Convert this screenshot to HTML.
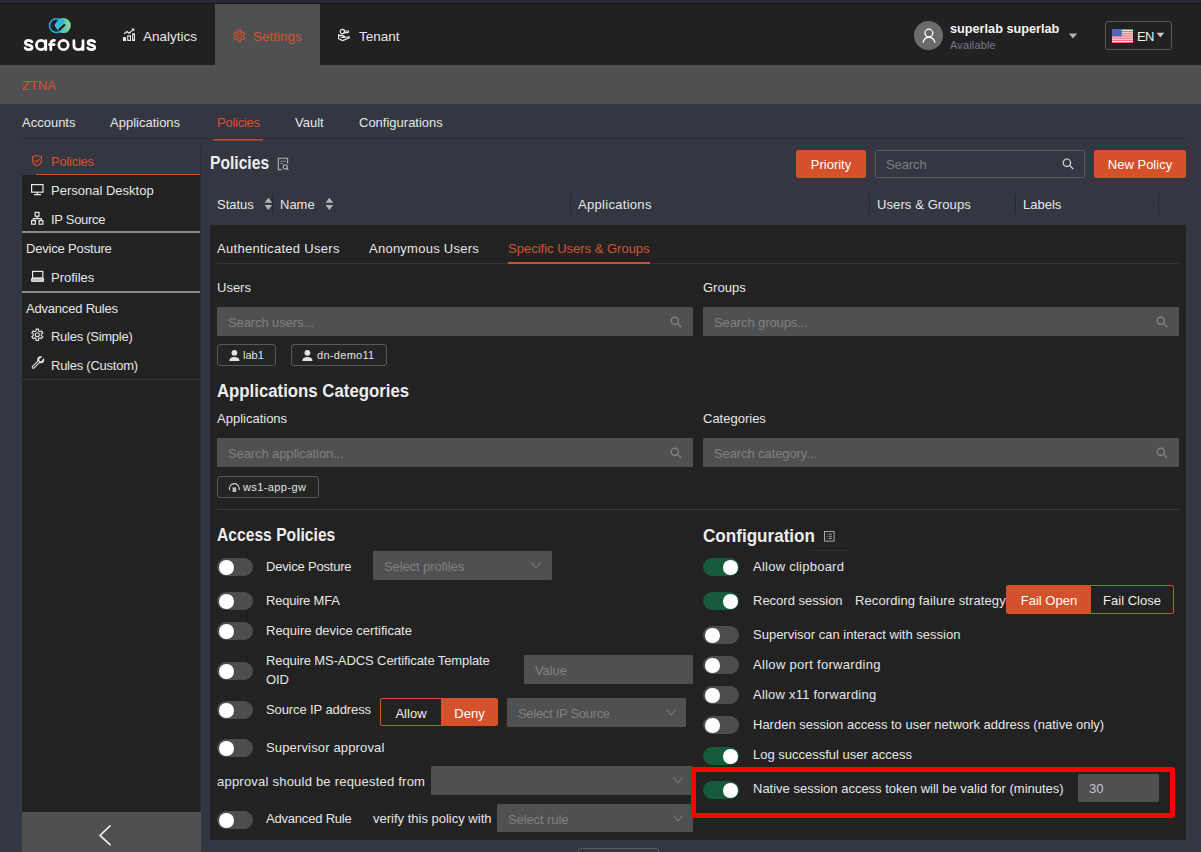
<!DOCTYPE html>
<html><head><meta charset="utf-8">
<style>
*{box-sizing:border-box;margin:0;padding:0}
html,body{width:1201px;height:852px;overflow:hidden;background:#343741;font-family:"Liberation Sans",sans-serif;color:#e6e6e6;font-size:13px;position:relative}
.a{position:absolute}
.t{position:absolute;white-space:nowrap;line-height:16px}
.or{color:#d4532f}
.sep{position:absolute;left:22px;width:178px;height:2px;background:#8a8a8a}
.btn{position:absolute;background:#d5512c;color:#fff;border-radius:2px;text-align:center;line-height:30px}
.inp{position:absolute;letter-spacing:-0.1px;background:#4f5051;color:#808080;line-height:31px;padding-left:11px;white-space:nowrap;border-radius:1px}
.tog{position:absolute;width:36px;height:18px;border-radius:9px;background:#4c4d4e}
.tog::after{content:"";position:absolute;left:2px;top:2px;width:14.5px;height:14.5px;border-radius:50%;background:#fff}
.tog.on{background:#165a3c}
.tog.on::after{left:20px}
.chip{position:absolute;height:22px;border:1px solid #57595c;border-radius:3px;font-size:11px;line-height:20px;color:#e2e2e2;background:#252525;white-space:nowrap}
.h2{font-size:17.5px;font-weight:bold;line-height:20px;color:#ededed;transform-origin:0 50%}
.hd{position:absolute;width:1px;height:20px;top:194px;background:#26282e}
.srt{position:absolute;top:197px}
.sic{position:absolute}
.chev{position:absolute}
</style></head><body>
<div class="a" style="left:0;top:0;width:1201px;height:3px;background:#2c2a38"></div>
<div class="a" style="left:0;top:3px;width:1201px;height:1px;background:#111114"></div>
<div class="a" style="left:0;top:4px;width:1201px;height:61px;background:#212121"></div>
<div class="a" style="left:215px;top:4px;width:105px;height:61px;background:#4f5052"></div>
<div class="a" style="left:0;top:65px;width:1201px;height:39px;background:#4f5052"></div>

<!-- logo -->
<svg class="a" style="left:0;top:0" width="110" height="60" viewBox="0 0 110 60">
<defs><linearGradient id="lg" x1="0" x2="1" y1="0" y2="0"><stop offset="0" stop-color="#30b4d4"/><stop offset="1" stop-color="#84de92"/></linearGradient></defs>
<circle cx="56.4" cy="25.6" r="6.9" fill="none" stroke="#22b2e2" stroke-width="1.5"/>
<circle cx="63.3" cy="25.6" r="7.5" fill="url(#lg)"/>
<path d="M57.4 25.4 L61.6 21.2" stroke="#35b8d8" stroke-width="5.4" stroke-linecap="round"/>
<path d="M59.2 30 L64.3 25" stroke="#222" stroke-width="2.4" stroke-linecap="round"/>
<g fill="none" stroke="#fff" stroke-width="2.7" stroke-linecap="round" stroke-linejoin="round">
<path d="M32 41.8 C31 40.6 29.8 40.4 28.6 40.4 C26.6 40.4 25.4 41.3 25.4 42.7 C25.4 44.4 27 44.7 28.7 45.1 C30.5 45.5 32.1 45.9 32.1 47.5 C32.1 49 30.6 49.6 28.6 49.6 C27 49.6 25.8 49.1 25.1 48"/>
<circle cx="41" cy="45" r="4.6"/><path d="M45.8 40.6 V49.7"/>
<path d="M50.8 49.7 V44 C50.8 41.6 51.9 40.4 54.4 40.4 M49.4 44.6 H54.2"/>
<circle cx="63.5" cy="45" r="4.7"/>
<path d="M73.9 40.6 V45.3 C73.9 48 75.6 49.6 78.4 49.6 C81.2 49.6 83 48 83 45.3 V40.6 M83 45 V49.7"/>
<path d="M94.7 41.8 C93.7 40.6 92.5 40.4 91.3 40.4 C89.3 40.4 88.1 41.3 88.1 42.7 C88.1 44.4 89.7 44.7 91.4 45.1 C93.2 45.5 94.8 45.9 94.8 47.5 C94.8 49 93.3 49.6 91.3 49.6 C89.7 49.6 88.5 49.1 87.8 48"/>
</g>
</svg>
<!-- analytics icon -->
<svg class="a" style="left:118px;top:24px" width="24" height="24" viewBox="0 0 24 24" fill="none" stroke="#e8e8e8" stroke-width="1.1">
<rect x="5.5" y="13.7" width="2" height="2.8" fill="#e8e8e8"/>
<rect x="9.75" y="11.85" width="2.7" height="4.6"/>
<rect x="14.65" y="9.85" width="1.8" height="6.6"/>
<path d="M6.2 9.8 L9 7.5 L11.3 9.2 L15 5.6" stroke-width="1.2"/>
<path d="M13.2 4.4 H16.3 V7.5 Z" fill="#e8e8e8" stroke="none"/>
</svg>
<!-- gear -->
<svg class="a" style="left:228px;top:24px" width="24" height="24" viewBox="0 0 24 24" fill="none" stroke="#cf5430" stroke-width="1.05" stroke-linejoin="round">
<path d="M10.07 7.78 L9.97 6.05 L12.63 6.05 L12.53 7.78 L14.16 8.73 L15.61 7.78 L16.94 10.08 L15.39 10.86 L15.39 12.74 L16.94 13.52 L15.61 15.82 L14.16 14.87 L12.53 15.82 L12.63 17.55 L9.97 17.55 L10.07 15.82 L8.44 14.87 L6.99 15.82 L5.66 13.52 L7.21 12.74 L7.21 10.86 L5.66 10.08 L6.99 7.78 L8.44 8.73 Z"/>
<circle cx="11.4" cy="11.8" r="2.2"/>
</svg>
<!-- tenant -->
<svg class="a" style="left:332px;top:24px" width="24" height="24" viewBox="0 0 24 24" fill="none" stroke="#e8e8e8" stroke-width="1.2" stroke-linejoin="round" stroke-linecap="round">
<circle cx="10.4" cy="7.6" r="2.2"/>
<path d="M12.3 7 H16.5 C16.8 7.6 16.4 8.5 15.5 8.6 H12"/>
<path d="M6.6 10.6 V14.8 L10.6 16.6 L17.5 13.8 C17.6 13 16.6 12.5 15.5 13 L12.5 13.4 M6.6 11.4 L9.5 11.3 L12.5 12.4 C12.7 13 12 13.6 11 13.4 L9 13"/>
</svg>
<div class="t" style="left:143px;top:29px;font-size:13.5px">Analytics</div>
<div class="t or" style="left:253px;top:29px;font-size:13.5px">Settings</div>
<div class="t" style="left:359px;top:29px;font-size:13.5px">Tenant</div>

<!-- user -->
<div class="a" style="left:914px;top:21px;width:29px;height:29px;border-radius:50%;background:#6b6b6b"></div>
<svg class="a" style="left:914px;top:21px" width="29" height="29" viewBox="0 0 29 29" fill="none" stroke="#fff" stroke-width="1.3">
<circle cx="14.9" cy="12.1" r="3.9"/>
<path d="M9.1 21.6 C9.6 18.3 11.7 16.3 14.9 16.3 C18 16.3 20.3 18.3 20.9 21.6"/>
</svg>
<div class="t" style="left:950px;top:21px;font-size:12.7px;font-weight:bold;color:#f4f4f4">superlab superlab</div>
<div class="t" style="left:950px;top:37px;font-size:11px;color:#7a7590;letter-spacing:0.15px">Available</div>
<svg class="a" style="left:1068px;top:33px" width="10" height="6" viewBox="0 0 10 6"><path d="M0.8 0.5 H9.2 L5 5.5 Z" fill="#b0b0b0"/></svg>
<!-- EN -->
<div class="a" style="left:1105px;top:21px;width:67px;height:29px;border:1px solid #58585a;border-radius:3px"></div>
<svg class="a" style="left:1112px;top:29px" width="21" height="14" viewBox="0 0 21 14">
<rect width="21" height="14" fill="#f5f5f5"/>
<g fill="#e85a62"><rect y="0" width="21" height="1.1"/><rect y="2.15" width="21" height="1.1"/><rect y="4.3" width="21" height="1.1"/><rect y="6.45" width="21" height="1.1"/><rect y="8.6" width="21" height="1.1"/><rect y="10.75" width="21" height="1.1"/><rect y="12.9" width="21" height="1.1"/></g>
<rect width="9.7" height="7.4" fill="#5a62b8"/>
</svg>
<div class="t" style="left:1137px;top:29px;font-size:13px;color:#f0f0f0;letter-spacing:-0.6px">EN</div>
<svg class="a" style="left:1156px;top:32px" width="9" height="6" viewBox="0 0 9 6"><path d="M0.6 0.8 H8.2 L4.4 5.6 Z" fill="#c8c8c8"/></svg>

<div class="t or" style="left:22px;top:78px">ZTNA</div>

<!-- subnav -->
<div class="t" style="left:22px;top:115px">Accounts</div>
<div class="t" style="left:110px;top:115px">Applications</div>
<div class="t or" style="left:217px;top:115px;letter-spacing:-0.25px">Policies</div>
<div class="t" style="left:295px;top:115px">Vault</div>
<div class="t" style="left:359px;top:115px">Configurations</div>
<div class="a" style="left:22px;top:138px;width:1164px;height:1px;background:#2b2d32"></div>
<div class="a" style="left:213px;top:139px;width:50px;height:1px;background:#c9502d"></div><div class="a" style="left:213px;top:140px;width:50px;height:1px;background:#c9502d;opacity:0.5"></div>

<!-- sidebar -->
<div class="a" style="left:200px;top:148px;width:1px;height:664px;background:#2c2e34"></div>
<svg class="a" style="left:28px;top:150px" width="18" height="20" viewBox="0 0 18 20" fill="none" stroke="#d5512c" stroke-width="1.2" stroke-linejoin="round" stroke-linecap="round">
<path d="M9 5.3 C7.5 6.2 6 6.6 4.6 6.6 V10.6 C4.6 13.2 6.5 14.9 9 15.7 C11.5 14.9 13.4 13.2 13.4 10.6 V6.6 C12 6.6 10.5 6.2 9 5.3 Z"/>
<path d="M7 10.6 L8.5 11.9 L11 9.4"/>
</svg>
<div class="t or" style="left:51px;top:154px;letter-spacing:-0.25px">Policies</div>
<div class="a" style="left:36px;top:174px;width:164px;height:1px;background:#d04f2c"></div>
<div class="a" style="left:22px;top:175px;width:178px;height:637px;background:#222222"></div>
<div class="a" style="left:22px;top:812px;width:179px;height:40px;background:#4f5052"></div>
<svg class="a" style="left:95px;top:822px" width="20" height="26" viewBox="0 0 20 26" fill="none" stroke="#ececec" stroke-width="1.7" stroke-linecap="round">
<path d="M15 3.8 L5 13.4 L15 22.6"/>
</svg>
<!-- sidebar icons -->
<svg class="a" style="left:26px;top:180px" width="24" height="50" viewBox="0 0 24 50" fill="none" stroke="#e6e6e6" stroke-width="1.2">
<rect x="5.6" y="4.6" width="11.4" height="7.6"/>
<path d="M11.3 12.2 V14.2 M8 14.6 H15" stroke-width="1.4"/>
<rect x="9.2" y="32.4" width="3.8" height="3.8"/>
<path d="M11.1 36.2 V38.6 M7.3 40.6 V38.6 H15.3 V40.6"/>
<rect x="5.6" y="40.6" width="3.8" height="3.6"/>
<rect x="13.1" y="40.6" width="3.8" height="3.6"/>
</svg>
<svg class="a" style="left:26px;top:265px" width="24" height="25" viewBox="0 0 24 25" fill="none" stroke="#e6e6e6" stroke-width="1.2">
<rect x="6.6" y="6.4" width="10.2" height="6.6"/>
<path d="M5.6 13.4 H17.6 V16.4 H5.6 Z" fill="#bdbdbd" stroke-width="1"/>
</svg>
<svg class="a" style="left:26px;top:322px" width="24" height="56" viewBox="0 0 24 56" fill="none" stroke="#e6e6e6" stroke-width="1.1" stroke-linejoin="round">
<path d="M10.10 8.88 L10.00 7.15 L12.60 7.15 L12.50 8.88 L14.10 9.80 L15.54 8.84 L16.85 11.10 L15.29 11.88 L15.29 13.72 L16.85 14.50 L15.54 16.76 L14.10 15.80 L12.50 16.72 L12.60 18.45 L10.00 18.45 L10.10 16.72 L8.50 15.80 L7.06 16.76 L5.75 14.50 L7.31 13.72 L7.31 11.88 L5.75 11.10 L7.06 8.84 L8.50 9.80 Z"/>
<circle cx="11.3" cy="12.8" r="2"/>
<path d="M7.3 45.2 L12.6 39.9" stroke-width="3.2" stroke-linecap="round"/>
<circle cx="14.7" cy="37.8" r="3.5" fill="#e6e6e6" stroke="none"/>
<path d="M7.3 45.2 L12.6 39.9" stroke="#222" stroke-width="1.1" stroke-linecap="round"/>
<circle cx="14.7" cy="37.8" r="1.5" fill="#222" stroke="none"/>
<path d="M14.7 37.8 L18.6 33.9" stroke="#222" stroke-width="2.2"/>
</svg>
<div class="t" style="left:51px;top:183px">Personal Desktop</div>
<div class="t" style="left:51px;top:212px;letter-spacing:-0.3px">IP Source</div>
<div class="sep" style="top:231px"></div>
<div class="t" style="left:26px;top:241px;letter-spacing:-0.18px">Device Posture</div>
<div class="t" style="left:51px;top:270px">Profiles</div>
<div class="sep" style="top:291px"></div>
<div class="t" style="left:26px;top:301px;letter-spacing:-0.2px">Advanced Rules</div>
<div class="t" style="left:51px;top:329px;letter-spacing:-0.27px">Rules (Simple)</div>
<div class="t" style="left:51px;top:358px;letter-spacing:-0.25px">Rules (Custom)</div>
<div class="a" style="left:22px;top:379px;width:178px;height:1px;background:#333437"></div>

<!-- main header -->
<div class="t h2" style="left:210px;top:153px;transform:scaleX(0.893)">Policies</div>
<svg class="a" style="left:270px;top:150px" width="30" height="25" viewBox="0 0 30 25" fill="none" stroke="#b4b4b4" stroke-width="1.1">
<path d="M11.6 19.6 H8.3 V8.3 H17.6 V13.4"/>
<path d="M10.3 11.2 H16 M10.3 13.5 H13" stroke="#8a8a8a"/>
<circle cx="15.3" cy="16.9" r="2.1"/>
<path d="M16.8 18.4 L18.4 20"/>
</svg>
<div class="btn" style="left:796px;top:150px;width:70px;height:28px">Priority</div>
<div class="a" style="left:875px;top:150px;width:210px;height:28px;border:1px solid #56585c;border-radius:2px;color:#7c7c7c;line-height:28px;padding-left:10px;font-size:13px;letter-spacing:-0.1px">Search</div>
<svg class="a" style="left:1055px;top:152px" width="30" height="25" viewBox="0 0 30 25" fill="none" stroke="#e0e0e0" stroke-width="1.2">
<circle cx="11.9" cy="10.7" r="3.7"/><path d="M14.6 13.4 L18.2 17"/>
</svg>
<div class="btn" style="left:1094px;top:150px;width:92px;height:28px">New Policy</div>

<div class="t" style="left:217px;top:197px">Status</div>
<svg class="srt" style="left:264px" width="9" height="14" viewBox="0 0 9 14"><path d="M0.6 5.8 H8.2 L4.4 0.8 Z M0.6 8 H8.2 L4.4 13 Z" fill="#b4b4b4"/></svg>
<div class="hd" style="left:272px"></div>
<div class="t" style="left:280px;top:197px">Name</div>
<svg class="srt" style="left:325px" width="9" height="14" viewBox="0 0 9 14"><path d="M0.6 5.8 H8.2 L4.4 0.8 Z M0.6 8 H8.2 L4.4 13 Z" fill="#b4b4b4"/></svg>
<div class="hd" style="left:570px"></div>
<div class="t" style="left:578px;top:197px;letter-spacing:0.3px">Applications</div>
<div class="hd" style="left:869px"></div>
<div class="t" style="left:877px;top:197px;letter-spacing:0.1px">Users &amp; Groups</div>
<div class="hd" style="left:1015px"></div>
<div class="t" style="left:1023px;top:197px">Labels</div>
<div class="hd" style="left:1158px"></div>

<!-- panel -->
<div class="a" style="left:210px;top:225px;width:976px;height:615px;background:#222222"></div>
<div class="t" style="left:217px;top:241px;letter-spacing:0.3px">Authenticated Users</div>
<div class="t" style="left:369px;top:241px;letter-spacing:0.25px">Anonymous Users</div>
<div class="t or" style="left:508px;top:241px">Specific Users &amp; Groups</div>
<div class="a" style="left:217px;top:263px;width:962px;height:1px;background:#333436"></div>
<div class="a" style="left:508px;top:262px;width:142px;height:2px;background:#d5512c"></div>

<div class="t" style="left:217px;top:280px">Users</div>
<div class="t" style="left:703px;top:280px">Groups</div>
<div class="inp" style="left:217px;top:307px;width:476px;height:29px">Search users...</div>
<div class="inp" style="left:703px;top:307px;width:476px;height:29px">Search groups...</div>
<div class="chip" style="left:217px;top:344px;width:59px;padding-left:25px">lab1</div>
<div class="chip" style="left:291px;top:344px;width:96px;padding-left:25px;letter-spacing:0.3px">dn-demo11</div>
<svg class="a" style="left:228px;top:348px" width="13" height="14" viewBox="0 0 13 14" fill="#e2e2e2">
<circle cx="6.4" cy="4.8" r="2.9"/><path d="M1.3 13 C1.3 10.3 3 9 6.4 9 C9.8 9 11.5 10.3 11.5 13 Z"/>
</svg>
<svg class="a" style="left:301px;top:348px" width="13" height="14" viewBox="0 0 13 14" fill="#e2e2e2">
<circle cx="6.4" cy="4.8" r="2.9"/><path d="M1.3 13 C1.3 10.3 3 9 6.4 9 C9.8 9 11.5 10.3 11.5 13 Z"/>
</svg>

<div class="t h2" style="left:217px;top:381px;transform:scaleX(0.959)">Applications Categories</div>
<div class="t" style="left:217px;top:411px">Applications</div>
<div class="t" style="left:703px;top:411px">Categories</div>
<div class="inp" style="left:217px;top:438px;width:476px;height:29px">Search application...</div>
<div class="inp" style="left:703px;top:438px;width:476px;height:29px">Search category...</div>
<div class="chip" style="left:217px;top:476px;width:102px;padding-left:25px;letter-spacing:0.4px">ws1-app-gw</div>
<svg class="a" style="left:228px;top:482px" width="13" height="11" viewBox="0 0 13 11" fill="none" stroke="#d0d0d0" stroke-width="1.1">
<path d="M1.6 8.2 C0.6 5 2.8 1.6 6.3 1.6 C9.8 1.6 12 5 11 8.2"/>
<rect x="4.6" y="5.4" width="3.6" height="4.6" fill="#bbb" stroke="none"/>
</svg>
<div class="a" style="left:217px;top:509px;width:962px;height:1px;background:#3a3b3d"></div>

<!-- search icons in inputs -->
<svg class="sic" style="left:661px;top:310px" width="30" height="25" viewBox="0 0 30 25" fill="none" stroke="#8a8a8a" stroke-width="1.2"><circle cx="13.8" cy="10.7" r="3.6"/><path d="M16.4 13.3 L20.2 17.2"/></svg>
<svg class="sic" style="left:1147px;top:310px" width="30" height="25" viewBox="0 0 30 25" fill="none" stroke="#8a8a8a" stroke-width="1.2"><circle cx="13.8" cy="10.7" r="3.6"/><path d="M16.4 13.3 L20.2 17.2"/></svg>
<svg class="sic" style="left:661px;top:441px" width="30" height="25" viewBox="0 0 30 25" fill="none" stroke="#8a8a8a" stroke-width="1.2"><circle cx="13.8" cy="10.7" r="3.6"/><path d="M16.4 13.3 L20.2 17.2"/></svg>
<svg class="sic" style="left:1147px;top:441px" width="30" height="25" viewBox="0 0 30 25" fill="none" stroke="#8a8a8a" stroke-width="1.2"><circle cx="13.8" cy="10.7" r="3.6"/><path d="M16.4 13.3 L20.2 17.2"/></svg>

<div class="t h2" style="left:217px;top:525px;transform:scaleX(0.894)">Access Policies</div>
<div class="t h2" style="left:703px;top:526px;transform:scaleX(0.976)">Configuration</div>
<svg class="a" style="left:820px;top:526px" width="20" height="20" viewBox="0 0 20 20" fill="none" stroke="#a8a8a8" stroke-width="1">
<rect x="4.5" y="5.5" width="9.6" height="9.6"/>
<path d="M6.8 8.2 H7.6 M6.8 10.3 H7.6 M6.8 12.4 H7.6 M8.8 8.2 H11.8 M8.8 10.3 H11.8 M8.8 12.4 H11.8"/>
</svg>
<div class="a" style="left:810px;top:550px;width:39px;height:1px;background:#303132"></div>

<!-- access policies -->
<div class="tog" style="left:217px;top:558px"></div><div class="t" style="left:266px;top:559px;letter-spacing:-0.2px">Device Posture</div>
<div class="inp" style="left:373px;top:551px;width:179px;height:29px">Select profiles</div>
<div class="tog" style="left:217px;top:592px"></div><div class="t" style="left:266px;top:593px;letter-spacing:-0.2px">Require MFA</div>
<div class="tog" style="left:217px;top:622px"></div><div class="t" style="left:266px;top:623px">Require device certificate</div>
<div class="tog" style="left:217px;top:662px"></div><div class="t" style="left:266px;top:651px;line-height:19px;letter-spacing:-0.1px">Require MS-ADCS Certificate Template<br>OID</div>
<div class="inp" style="left:524px;top:655px;width:169px;height:29px">Value</div>
<div class="tog" style="left:217px;top:701px"></div><div class="t" style="left:266px;top:702px;letter-spacing:-0.1px">Source IP address</div>
<div class="a" style="left:380px;top:698px;width:118px;height:28px;border:1px solid #d5512c;border-radius:2px;overflow:hidden">
<div class="a" style="left:60px;top:0;width:57px;height:26px;background:#d5512c"></div>
<div class="t" style="left:0;top:7px;width:60px;text-align:center;color:#eee">Allow</div>
<div class="t" style="left:60px;top:7px;width:57px;text-align:center;color:#fff">Deny</div>
</div>
<div class="inp" style="left:507px;top:698px;width:179px;height:29px;letter-spacing:-0.3px">Select IP Source</div>
<div class="tog" style="left:217px;top:739px"></div><div class="t" style="left:266px;top:740px;letter-spacing:0.15px">Supervisor approval</div>
<div class="t" style="left:217px;top:774px;letter-spacing:0.22px">approval should be requested from</div>
<div class="inp" style="left:431px;top:766px;width:262px;height:29px"></div>
<div class="tog" style="left:217px;top:811px"></div><div class="t" style="left:266px;top:811px;letter-spacing:-0.2px">Advanced Rule</div>
<div class="t" style="left:373px;top:811px">verify this policy with</div>
<div class="inp" style="left:497px;top:804px;width:196px;height:28px">Select rule</div>
<!-- chevrons -->
<svg class="chev" style="left:530px;top:561px" width="12" height="10" viewBox="0 0 12 10" fill="none" stroke="#7c7c7c" stroke-width="1.1"><path d="M1.5 1.5 L6 7 L10.5 1.5"/></svg>
<svg class="chev" style="left:665px;top:708px" width="12" height="10" viewBox="0 0 12 10" fill="none" stroke="#7c7c7c" stroke-width="1.1"><path d="M1.5 1.5 L6 7 L10.5 1.5"/></svg>
<svg class="chev" style="left:672px;top:776px" width="12" height="10" viewBox="0 0 12 10" fill="none" stroke="#7c7c7c" stroke-width="1.1"><path d="M1.5 1.5 L6 7 L10.5 1.5"/></svg>
<svg class="chev" style="left:672px;top:814px" width="12" height="10" viewBox="0 0 12 10" fill="none" stroke="#7c7c7c" stroke-width="1.1"><path d="M1.5 1.5 L6 7 L10.5 1.5"/></svg>

<!-- configuration -->
<div class="tog on" style="left:703px;top:558px"></div><div class="t" style="left:753px;top:559px;letter-spacing:0.25px">Allow clipboard</div>
<div class="tog on" style="left:703px;top:592px"></div><div class="t" style="left:753px;top:593px">Record session</div>
<div class="t" style="left:855px;top:593px;letter-spacing:0.1px">Recording failure strategy</div>
<div class="a" style="left:1006px;top:585px;width:168px;height:29px;border:1px solid #d5512c;border-radius:2px;overflow:hidden">
<div class="a" style="left:0;top:0;width:84px;height:27px;background:#d5512c"></div>
<div class="t" style="left:0;top:7px;width:84px;text-align:center;color:#fff">Fail Open</div>
<div class="t" style="left:84px;top:7px;width:82px;text-align:center;color:#eee">Fail Close</div>
</div>
<div class="tog" style="left:703px;top:626px"></div><div class="t" style="left:753px;top:627px">Supervisor can interact with session</div>
<div class="tog" style="left:703px;top:656px"></div><div class="t" style="left:753px;top:657px;letter-spacing:0.3px">Allow port forwarding</div>
<div class="tog" style="left:703px;top:686px"></div><div class="t" style="left:753px;top:687px;letter-spacing:0.22px">Allow x11 forwarding</div>
<div class="tog" style="left:703px;top:716px"></div><div class="t" style="left:753px;top:717px">Harden session access to user network address (native only)</div>
<div class="tog on" style="left:703px;top:747px"></div><div class="t" style="left:753px;top:747px">Log successful user access</div>
<div class="tog on" style="left:703px;top:781px"></div><div class="t" style="left:753px;top:781px">Native session access token will be valid for (minutes)</div>
<div class="inp" style="left:1078px;top:774px;width:81px;height:28px;color:#c8c8c8;padding-left:11px;line-height:30px;border-radius:2px">30</div>
<div class="a" style="left:691px;top:767px;width:484px;height:51px;border:5px solid #ff0000;border-radius:3px"></div>

<!-- bottom partial box -->
<div class="a" style="left:578px;top:848px;width:81px;height:10px;border:1px solid #57595c;border-radius:3px;background:#343741"></div>
</body></html>
